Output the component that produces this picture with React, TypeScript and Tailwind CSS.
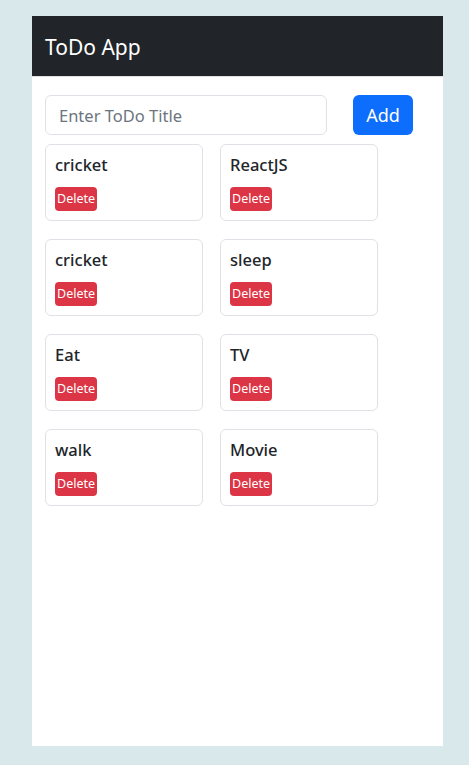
import React, { useState } from 'react';

type Todo = { id: number; title: string };

const initial: Todo[] = [
  { id: 1, title: 'cricket' },
  { id: 2, title: 'ReactJS' },
  { id: 3, title: 'cricket' },
  { id: 4, title: 'sleep' },
  { id: 5, title: 'Eat' },
  { id: 6, title: 'TV' },
  { id: 7, title: 'walk' },
  { id: 8, title: 'Movie' },
];

export default function App() {
  const [todos, setTodos] = useState<Todo[]>(initial);
  const [title, setTitle] = useState('');

  function addTodo() {
    if (!title.trim()) return;
    setTodos((prev) => [...prev, { id: Date.now(), title }]);
    setTitle('');
  }

  return (
    <div className="min-h-[765px] bg-[#d9e8ea] pt-4 pl-8 pr-[26px] font-['Segoe_UI','Noto_Sans',sans-serif]">
      <div className="h-[730px] bg-white">
        <div className="h-[61px] bg-[#212529] border-b border-[#dee2e6] flex items-center pl-[13px] pt-[2px]">
          <span className="text-white text-[21px] leading-none">ToDo App</span>
        </div>
        <div className="px-[13px] pt-[18px]">
          <div className="flex items-center">
            <input
              className="w-[282px] h-[40px] rounded-[6px] border border-[#dee2e6] px-[13px] text-[16.5px] text-[#212529] placeholder:text-[#6c757d] outline-none"
              placeholder="Enter ToDo Title"
              value={title}
              onChange={(e) => setTitle(e.target.value)}
              onKeyDown={(e) => e.key === 'Enter' && addTodo()}
            />
            <button
              className="ml-[26px] w-[60px] h-[40px] rounded-[6px] bg-[#0d6efd] text-white text-[18px]"
              onClick={addTodo}
            >
              Add
            </button>
          </div>
          <div className="grid grid-cols-[158px_158px] gap-x-[17px] gap-y-[18px] mt-[9px]">
            {todos.map((t) => (
              <div key={t.id} className="h-[77px] rounded-[6px] border border-[#dee2e6] px-[9px] pt-[8px]">
                <div className="text-[16.5px] font-medium text-[#212529] leading-[24px]">{t.title}</div>
                <button
                  className="mt-[10px] h-[24px] px-[2px] rounded-[4px] bg-[#dc3545] text-white text-[12.5px] leading-none"
                  onClick={() => setTodos((prev) => prev.filter((x) => x.id !== t.id))}
                >
                  Delete
                </button>
              </div>
            ))}
          </div>
        </div>
      </div>
    </div>
  );
}
